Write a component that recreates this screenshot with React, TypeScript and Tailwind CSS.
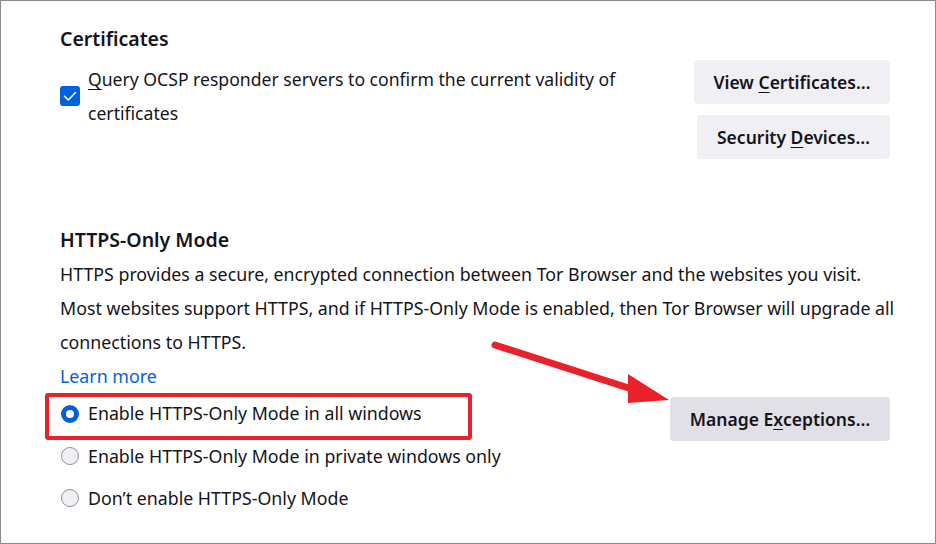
import React from "react";

const font = { fontFamily: '"Noto Sans", "Open Sans", sans-serif' };

function Btn({ children, className = "" }: { children: React.ReactNode; className?: string }) {
  return (
    <div
      className={`h-[44px] rounded-[4px] flex items-center justify-center text-[17.5px] font-semibold text-[#15141a] ${className}`}
    >
      {children}
    </div>
  );
}

function Radio({ checked }: { checked?: boolean }) {
  return checked ? (
    <div className="w-[18px] h-[18px] rounded-full bg-[#0061e0] flex items-center justify-center shrink-0">
      <div className="w-[8px] h-[8px] rounded-full bg-white" />
    </div>
  ) : (
    <div className="w-[18px] h-[18px] rounded-full bg-[#f0f0f4] border border-[#8f8f9d] shrink-0" />
  );
}

export default function App() {
  return (
    <div
      className="relative w-[936px] h-[544px] bg-white border border-[#8a8a8a] overflow-hidden text-[#15141a]"
      style={font}
    >
      <div className="pl-[59px] pr-[45px] pt-[22px]">
        {/* Certificates */}
        <div className="text-[19.5px] font-semibold leading-[32px]">Certificates</div>
        <div className="flex justify-between mt-[5px]">
          <div className="flex items-center gap-[8px] self-start pt-[2px]">
            <div className="w-[20px] h-[20px] rounded-[3px] bg-[#0061e0] flex items-center justify-center shrink-0">
              <svg width="14" height="14" viewBox="0 0 14 14" fill="none">
                <path d="M1.5 7.2 L5.3 11 L12.5 3.5" stroke="white" strokeWidth="1.6" strokeLinecap="round" strokeLinejoin="round" />
              </svg>
            </div>
            <div className="text-[17.6px] leading-[34px] w-[560px]">
              <span className="underline underline-offset-[3px]">Q</span>uery OCSP responder servers to confirm the current validity of certificates
            </div>
          </div>
          <div className="flex flex-col items-end gap-[11px]">
            <Btn className="w-[196px] bg-[#f0f0f4]">
              View&nbsp;<span className="underline underline-offset-[3px]">C</span>ertificates…
            </Btn>
            <Btn className="w-[193px] bg-[#f0f0f4]">
              Security&nbsp;<span className="underline underline-offset-[3px]">D</span>evices…
            </Btn>
          </div>
        </div>

        {/* HTTPS-Only Mode */}
        <div className="text-[19.5px] font-semibold leading-[32px] mt-[65px]">HTTPS-Only Mode</div>
        <div className="text-[17.8px] leading-[34px] mt-[1px] -mr-[20px] whitespace-nowrap">
          HTTPS provides a secure, encrypted connection between Tor Browser and the websites you visit.
          <br />
          Most websites support HTTPS, and if HTTPS-Only Mode is enabled, then Tor Browser will upgrade all
          <br />
          connections to HTTPS.
        </div>
        <div className="text-[17.8px] leading-[34px] text-[#0061e0]">Learn more</div>
        <div className="flex justify-between items-start -mt-[1px]">
          <div className="flex flex-col">
            <div className="flex items-center gap-[9px] h-[43px] pl-[1px]">
              <Radio checked />
              <span className="text-[17.8px]">Enable HTTPS-Only Mode in all windows</span>
            </div>
            <div className="flex items-center gap-[9px] h-[42px] pl-[1px]">
              <Radio />
              <span className="text-[17.8px]">Enable HTTPS-Only Mode in private windows only</span>
            </div>
            <div className="flex items-center gap-[9px] h-[42px] pl-[1px]">
              <Radio />
              <span className="text-[17.8px]">Don’t enable HTTPS-Only Mode</span>
            </div>
          </div>
          <Btn className="w-[220px] bg-[#e0e0e6] mt-[5px]">
            Manage E<span className="underline underline-offset-[3px]">x</span>ceptions…
          </Btn>
        </div>
      </div>

      {/* Annotation overlay */}
      <div className="absolute left-[44px] top-[392px] w-[427px] h-[47px] border-[4px] border-[#e8212b] rounded-[3px]" />
      <svg className="absolute left-0 top-0" width="936" height="544" viewBox="0 0 936 544">
        <line x1="494" y1="344" x2="640" y2="391" stroke="#e8212b" strokeWidth="7" strokeLinecap="round" />
        <polygon points="668,399 627,373 627,402" fill="#e8212b" />
      </svg>
    </div>
  );
}
